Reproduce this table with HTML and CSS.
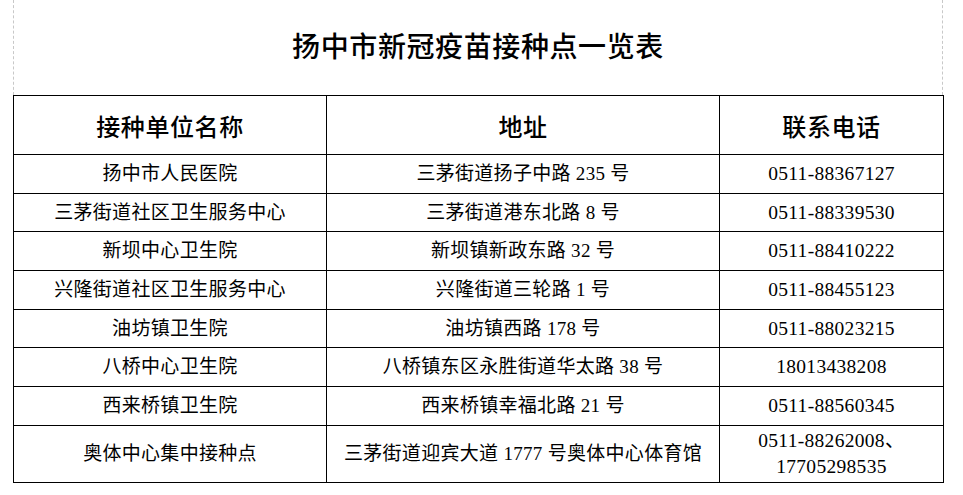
FILE: index.html
```html
<!DOCTYPE html>
<html lang="zh-CN">
<head>
<meta charset="utf-8">
<title>扬中市新冠疫苗接种点一览表</title>
<link rel="stylesheet" href="styles.css">
</head>
<body>
<div class="page">
  <div class="title-area">
    <h1 class="title">扬中市新冠疫苗接种点一览表</h1>
  </div>
  <table class="sites">
    <colgroup>
      <col class="c1"><col class="c2"><col class="c3">
    </colgroup>
    <thead>
      <tr class="head-row"><th>接种单位名称</th><th>地址</th><th>联系电话</th></tr>
    </thead>
    <tbody>
      <tr class="r"><td>扬中市人民医院</td><td>三茅街道扬子中路 235 号</td><td class="num">0511-88367127</td></tr>
      <tr class="r"><td>三茅街道社区卫生服务中心</td><td>三茅街道港东北路 8 号</td><td class="num">0511-88339530</td></tr>
      <tr class="r"><td>新坝中心卫生院</td><td>新坝镇新政东路 32 号</td><td class="num">0511-88410222</td></tr>
      <tr class="r"><td>兴隆街道社区卫生服务中心</td><td>兴隆街道三轮路 1 号</td><td class="num">0511-88455123</td></tr>
      <tr class="r"><td>油坊镇卫生院</td><td>油坊镇西路 178 号</td><td class="num">0511-88023215</td></tr>
      <tr class="r"><td>八桥中心卫生院</td><td>八桥镇东区永胜街道华太路 38 号</td><td class="num">18013438208</td></tr>
      <tr class="r"><td>西来桥镇卫生院</td><td>西来桥镇幸福北路 21 号</td><td class="num">0511-88560345</td></tr>
      <tr class="last-row"><td>奥体中心集中接种点</td><td>三茅街道迎宾大道 1777 号奥体中心体育馆</td><td class="num two">0511-88262008、<br>17705298535</td></tr>
    </tbody>
  </table>
</div>
</body>
</html>
```

FILE: styles.css
```css
html, body {
  margin: 0;
  padding: 0;
  background: #ffffff;
}
body {
  font-family: "Liberation Serif", "Noto Sans CJK SC", serif;
  color: #000;
}
.page {
  margin-left: 13px;
  width: 930px;
}
.title-area {
  height: 95px;
  box-sizing: border-box;
  border-left: 1px dashed #c8c8c8;
  border-right: 1px dashed #c8c8c8;
  display: flex;
  align-items: center;
  justify-content: center;
}
.title {
  margin: 0;
  padding-bottom: 6px;
  font-family: "Noto Sans CJK SC", sans-serif;
  font-size: 28px;
  font-weight: 500;
  line-height: 1;
  letter-spacing: 0.6px;
}
.sites {
  width: 930px;
  table-layout: fixed;
  border-collapse: collapse;
}
.c1 { width: 313px; }
.c2 { width: 393px; }
.c3 { width: 224px; }
.sites th, .sites td {
  border: 1px solid #000;
  padding: 0;
  text-align: center;
  vertical-align: middle;
}
.sites th {
  font-family: "Noto Sans CJK SC", sans-serif;
  font-size: 24px;
  font-weight: 500;
  letter-spacing: 0.6px;
}
.head-row { height: 59px; }
.sites td {
  font-family: "Liberation Serif", "Noto Sans CJK SC", serif;
  font-size: 19px;
  letter-spacing: 0.3px;
  line-height: 26px;
}
.r { height: 38.7px; }
.last-row { height: 57px; }
.sites td.num {
  font-size: 19.5px;
}
```
